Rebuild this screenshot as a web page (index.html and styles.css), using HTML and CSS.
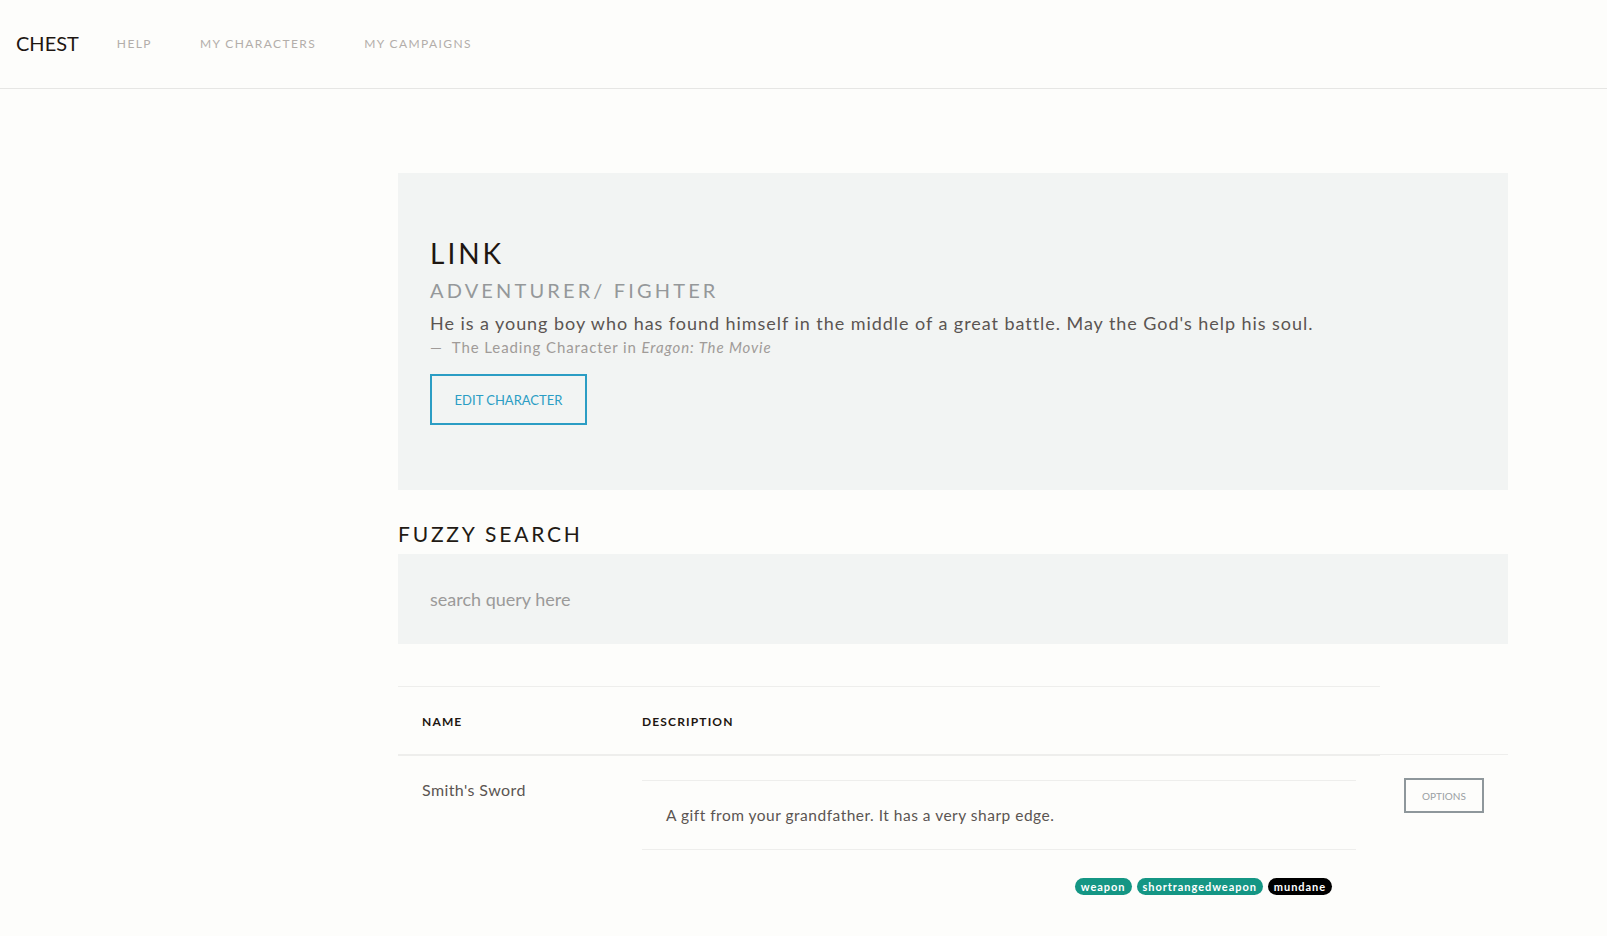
FILE: index.html
```html
<!DOCTYPE html>
<html lang="en">
<head>
<meta charset="utf-8">
<title>Chest</title>
<link rel="stylesheet" href="styles.css">
</head>
<body>
<header class="topbar">
  <a class="brand" href="#">CHEST</a>
  <nav class="nav-links">
    <a href="#">HELP</a>
    <a href="#">MY CHARACTERS</a>
    <a href="#">MY CAMPAIGNS</a>
  </nav>
</header>
<main class="layout">
  <aside class="sidebar"></aside>
  <section class="content">
    <div class="hero">
      <h1 class="hero-title">LINK</h1>
      <h2 class="hero-subtitle">ADVENTURER/ FIGHTER</h2>
      <blockquote class="hero-quote">
        <p>He is a young boy who has found himself in the middle of a great battle. May the God's help his soul.</p>
        <footer class="hero-cite">&mdash;&nbsp; The Leading Character in <cite>Eragon: The Movie</cite></footer>
      </blockquote>
      <button class="btn-edit" type="button">EDIT CHARACTER</button>
    </div>

    <h3 class="section-title">FUZZY SEARCH</h3>
    <input class="search-input" type="text" placeholder="search query here">

    <table class="items">
      <colgroup>
        <col class="col-name">
        <col class="col-desc">
        <col class="col-opt">
      </colgroup>
      <thead>
        <tr>
          <th>NAME</th>
          <th>DESCRIPTION</th>
        </tr>
      </thead>
      <tbody>
        <tr>
          <td class="cell-name">Smith's Sword</td>
          <td class="cell-desc">
            <table class="desc-table">
              <tr><td class="desc-text">A gift from your grandfather. It has a very sharp edge.</td></tr>
              <tr><td class="desc-tags">
                <span class="tag tag-teal">weapon</span><span class="tag tag-teal">shortrangedweapon</span><span class="tag tag-black">mundane</span>
              </td></tr>
            </table>
          </td>
          <td class="cell-opt"><button class="btn-options" type="button">OPTIONS</button></td>
        </tr>
      </tbody>
    </table>
  </section>
</main>
</body>
</html>
```

FILE: styles.css
```css
* { box-sizing: border-box; }

html, body {
  margin: 0;
  padding: 0;
  background: #fdfdfb;
  font-family: "Lato", "Open Sans", sans-serif;
  color: #5b5552;
}

a { text-decoration: none; }

/* top bar */
.topbar {
  height: 89px;
  display: flex;
  align-items: center;
  padding: 0 0 3px 16px;
  border-bottom: 1px solid #e6e6e4;
}

.brand {
  font-size: 20px;
  letter-spacing: 0;
  color: #1e1611;
  margin-right: 14px;
}

.nav-links {
  display: flex;
  padding-top: 1px;
}

.nav-links a {
  padding: 0 24px;
  font-size: 12px;
  letter-spacing: 1.4px;
  color: #b3aeaa;
}

/* layout */
.layout {
  display: grid;
  grid-template-columns: 398px 1110px;
  padding-top: 84px;
  padding-bottom: 40px;
}

/* hero */
.hero {
  background: #f2f4f3;
  padding: 63px 32px 65px;
}

.hero-title {
  margin: 0;
  font-size: 28px;
  line-height: 34px;
  font-weight: 400;
  letter-spacing: 3px;
  color: #1e1611;
}

.hero-subtitle {
  margin: 8px 0 0;
  font-size: 20px;
  line-height: 24px;
  font-weight: 400;
  letter-spacing: 3.15px;
  color: #95989a;
}

.hero-quote {
  margin: 10px 0 0;
  padding: 0;
}

.hero-quote p {
  margin: 0;
  font-size: 18px;
  line-height: 22px;
  letter-spacing: 0.95px;
  color: #5b5552;
}

.hero-cite {
  margin-top: 4px;
  font-size: 15px;
  line-height: 18px;
  letter-spacing: 0.9px;
  color: #a09b98;
}

.hero-cite cite {
  font-style: italic;
}

.btn-edit {
  display: block;
  margin-top: 18px;
  width: 157px;
  height: 51px;
  padding: 0;
  border: 2px solid #2b9dc4;
  background: transparent;
  font-family: inherit;
  font-size: 13px;
  color: #2b9dc4;
}

/* fuzzy search */
.section-title {
  margin: 31px 0 0;
  font-size: 21px;
  line-height: 25px;
  font-weight: 400;
  letter-spacing: 2.8px;
  color: #221a14;
}

.search-input {
  display: block;
  margin-top: 8px;
  width: 100%;
  height: 90px;
  padding: 0 32px;
  border: none;
  outline: none;
  background: #f2f4f3;
  font-family: inherit;
  font-size: 18px;
  color: #5b5552;
}

.search-input::placeholder {
  color: #9b9a99;
}

/* items table */
.items {
  margin-top: 42px;
  width: 1110px;
  border-collapse: collapse;
  table-layout: fixed;
}

.col-name { width: 220px; }
.col-desc { width: 762px; }
.col-opt { width: 128px; }

.items th {
  height: 68px;
  padding: 2px 24px 0;
  text-align: left;
  font-size: 12px;
  font-weight: 700;
  letter-spacing: 1.15px;
  color: #1e1611;
  border-top: 1px solid #eeeeec;
  border-bottom: 2px solid #eeeeec;
}

.items > tbody > tr > td {
  padding: 24px;
  vertical-align: top;
  border-top: 1px solid #eeeeec;
}

.cell-name {
  font-size: 16px;
  line-height: 19px;
  letter-spacing: 0.4px;
  color: #5b5552;
}

.desc-table {
  width: 100%;
  border-collapse: collapse;
}

.desc-text {
  padding: 25px 24px 24px;
  border-top: 1px solid #eeeeec;
  border-bottom: 1px solid #eeeeec;
  font-size: 15.5px;
  line-height: 19px;
  letter-spacing: 0.5px;
  color: #5b5552;
}

.desc-tags {
  padding: 28px 24px 0;
  text-align: right;
  font-size: 0;
}

.tag {
  display: inline-block;
  height: 17px;
  margin-left: 5px;
  padding: 0 6px;
  border-radius: 9px;
  font-size: 11px;
  line-height: 17px;
  font-weight: 700;
  letter-spacing: 0.95px;
  color: #ffffff;
}

.tag-teal { background: #149684; }
.tag-black { background: #000000; }

.cell-opt {
  text-align: left;
}

.btn-options {
  display: block;
  margin-top: -1px;
  width: 80px;
  height: 35px;
  padding: 0;
  border: 2px solid #8e979b;
  background: transparent;
  font-family: inherit;
  font-size: 10px;
  color: #9aa0a3;
}
```
